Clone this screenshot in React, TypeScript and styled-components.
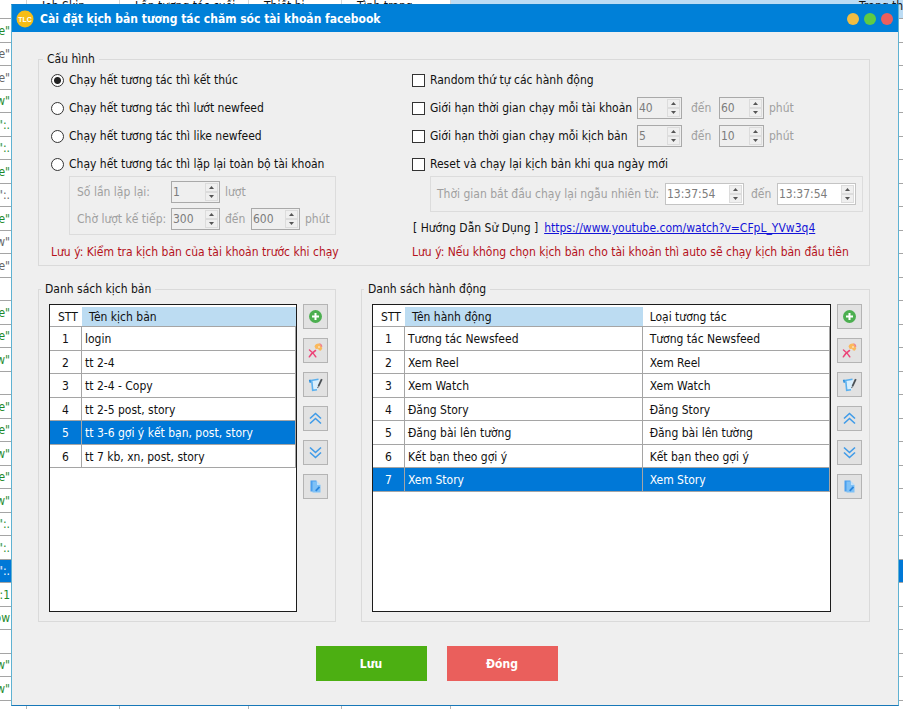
import React, { useState } from "react";
import type { ReactNode } from "react";
import styled, { createGlobalStyle, css } from "styled-components";

const GlobalStyle = createGlobalStyle`
  *, *::before, *::after { box-sizing: border-box; }
  body {
    margin: 0;
    background: #fff;
    color: #111;
    font: 12px/16px Tahoma, "DejaVu Sans Condensed", "Noto Sans", sans-serif;
  }
  input, button { font: inherit; }
`;

/* ---------- host grid behind the dialog ---------- */

const Page = styled.div`
  position: relative;
  min-height: 100vh;
  display: flex;
  overflow: hidden;
`;

const Backdrop = styled.div`
  position: absolute;
  inset: 0;
  overflow: hidden;
`;

const HostTable = styled.table`
  width: 100%;
  border-collapse: separate;
  border-spacing: 0;
  table-layout: fixed;

  th {
    height: 19px;
    padding: 0 0 4px 15px;
    border-right: 1px solid #d5d5d5;
    border-bottom: 1px solid #a5a5a5;
    font-weight: 400;
    text-align: left;
    white-space: nowrap;
    line-height: 12px;
    vertical-align: top;
  }
  th:first-child { padding: 0; }
  th:nth-child(n + 6) { background: #bcdcf4; border-right: 0; padding-left: 0; }
`;

const HostRow = styled.tr<{ $selected?: boolean }>`
  height: 24px;
  &:nth-child(even) { height: 23px; }
  background: ${(p) => (p.$selected ? "#0078d7" : "#fff")};

  td {
    padding: 0;
    border-right: 1px solid #b5b5b5;
    border-bottom: 1px solid #a5a5a5;
  }
  td:nth-child(n + 6) { border-right: 0; }
`;

const HostValue = styled.span<{ $tone: string }>`
  display: flex;
  justify-content: flex-end;
  width: 10px;
  height: 16px;
  white-space: nowrap;
  color: ${(p) => p.$tone};
`;

/* ---------- dialog frame ---------- */

const Dialog = styled.main`
  position: relative;
  flex: 1;
  min-width: 0;
  margin: 4px 4px 4px 11px;
  display: flex;
  flex-direction: column;
  background: #efefef;
  border: 1px solid #5fb2d2;
  border-top-color: #0a7fce;
  border-bottom-color: #1878b8;
`;

const TitleBar = styled.header`
  display: flex;
  align-items: center;
  gap: 6px;
  height: 27px;
  padding: 0 5px 0 4px;
  background: #0080d8;
  color: #fff;

  h1 { flex: 1; margin: 0; font-size: 12px; line-height: 16px; font-weight: 700; }
`;

const WindowDots = styled.div`
  display: flex;
  gap: 5px;
`;

const Dot = styled.button<{ $color: string }>`
  width: 12px;
  height: 12px;
  padding: 0;
  border: 0;
  border-radius: 50%;
  background: ${(p) => p.$color};
`;

const Body = styled.form`
  flex: 1;
  display: flex;
  flex-direction: column;
  padding: 20px 28px 24px 26px;
`;

const Group = styled.fieldset`
  min-width: 0;
  margin: 0;
  padding: 4px 6px 5px 12px;
  border: 1px solid #dadada;

  > legend { margin-left: -8px; padding: 0 4px; line-height: 14px; }
`;

/* ---------- settings ---------- */

const ConfigGrid = styled.div`
  display: grid;
  grid-template-columns: 361fr 451fr;
`;

const Options = styled.div`
  display: flex;
  flex-direction: column;
  gap: 8px;
`;

const OptionRow = styled.div`
  display: flex;
  align-items: center;
  height: 20px;
  white-space: nowrap;
`;

const Choice = styled.label<{ $width?: number }>`
  display: flex;
  align-items: center;
  gap: 5px;
  ${(p) => p.$width && css`flex: none; width: ${p.$width}px;`}
`;

const Radio = styled.input.attrs({ type: "radio" })`
  appearance: none;
  flex: none;
  width: 13px;
  height: 13px;
  margin: 0;
  border: 1px solid #333;
  border-radius: 50%;
  background: #fff;
  &:checked { background: radial-gradient(circle, #222 0 3px, #fff 4px); }
`;

const Check = styled.input.attrs({ type: "checkbox" })`
  appearance: none;
  flex: none;
  width: 13px;
  height: 13px;
  margin: 0;
  border: 1px solid #333;
  background: #fff;
  &:checked { background: #333; box-shadow: inset 0 0 0 2px #fff; }
`;

const SubPanel = styled.div<{ $pad: string }>`
  display: flex;
  flex-direction: column;
  gap: 5px;
  margin: -6px 0 0 18px;
  padding: ${(p) => p.$pad};
  border: 1px solid #dcdcdc;
  color: #a0a0a0;
`;

const LeftPanel = styled(SubPanel)`
  width: 267px;
`;

const FieldRow = styled.div`
  display: flex;
  align-items: center;
  height: 22px;
  white-space: nowrap;
`;

const FieldLabel = styled.label<{ $width: number }>`
  flex: none;
  width: ${(p) => p.$width}px;
`;

const Between = styled.span<{ $width: number; $left: number }>`
  flex: none;
  width: ${(p) => p.$width}px;
  padding-left: ${(p) => p.$left}px;
  color: #a0a0a0;
`;

const SpinFrame = styled.span<{ $width: number; $white?: boolean }>`
  display: flex;
  flex: none;
  width: ${(p) => p.$width}px;
  height: 22px;
  border: 1px solid ${(p) => (p.$white ? "#c4c4c4" : "#a9a9a9")};
  background: ${(p) => (p.$white ? "#fff" : "#efefef")};

  input {
    flex: 1;
    width: 0;
    min-width: 0;
    padding: 0 0 0 1px;
    border: 0;
    background: transparent;
    color: #7c7c7c;
    outline: 0;
  }
`;

const SpinButtons = styled.span`
  display: flex;
  flex-direction: column;
  width: 14px;
  padding: 1px 1px 1px 0;

  button {
    flex: 1;
    display: flex;
    align-items: center;
    justify-content: center;
    padding: 0;
    border: 1px solid #dcdcdc;
    background: #efefef;
  }
`;

const Note = styled.p`
  margin: 0;
  color: #b5121b;
  white-space: nowrap;
`;

const Guide = styled.p`
  display: flex;
  gap: 6px;
  margin: 0;
  padding: 8px 0 8px 1px;
  white-space: nowrap;

  a { color: #1414d8; }
`;

/* ---------- lists ---------- */

const Lists = styled.div`
  flex: 1;
  display: grid;
  grid-template-columns: 298fr 509fr;
  gap: 25px;
  margin-top: 16px;
`;

const ListGroup = styled(Group)`
  display: grid;
  padding: 8px 7px 9px 10px;
`;

const ListLayout = styled.div`
  display: flex;
  gap: 6px;
  min-height: 308px;
`;

const TableFrame = styled.div`
  flex: 1;
  min-width: 0;
  border: 1px solid #1c1c1c;
  background: #fff;
`;

const DataTable = styled.table`
  width: 100%;
  border-collapse: separate;
  border-spacing: 0;
  table-layout: fixed;
  white-space: nowrap;

  th {
    height: 22px;
    padding: 2px 0 0 7px;
    border-bottom: 1px solid #a5a5a5;
    font-weight: 400;
    text-align: left;
  }
  th:first-child { padding-left: 8px; }
  th:nth-child(2) { background: linear-gradient(#fff 2px, #bcdcf2 2px); }
`;

const DataRow = styled.tr<{ $selected: boolean }>`
  height: 24px;
  &:nth-child(even) { height: 23px; }
  background: ${(p) => (p.$selected ? "#0078d7" : "#fff")};
  color: ${(p) => (p.$selected ? "#fff" : "#111")};

  td {
    padding: 1px 0 0 3px;
    border-right: 1px solid #a5a5a5;
    border-bottom: 1px solid #a5a5a5;
  }
  td:first-child { padding: 1px 0 0; text-align: center; }
  td:nth-child(3) { padding-left: 7px; }
`;

const Tools = styled.div`
  display: flex;
  flex-direction: column;
  gap: 9px;
`;

const Tool = styled.button`
  display: flex;
  align-items: center;
  justify-content: center;
  width: 25px;
  height: 25px;
  padding: 0;
  border: 1px solid #b4b4b4;
  background: #e2e2e2;
`;

const Footer = styled.footer`
  display: flex;
  justify-content: center;
  gap: 20px;
  padding: 24px 35px 0 0;
`;

const Action = styled.button<{ $color: string }>`
  width: 111px;
  height: 35px;
  border: 0;
  background: ${(p) => p.$color};
  color: #fff;
  font-weight: 700;
`;

/* ---------- drawings ---------- */

const Logo = () => (
  <svg width="18" height="18" viewBox="0 0 18 18" aria-hidden="true">
    <circle cx="9" cy="9" r="8.5" fill="#f6bd16" />
    <text x="9" y="11.5" textAnchor="middle" fontSize="7" fontWeight="700" fill="#fff" fontFamily="Liberation Sans, sans-serif">TLC</text>
  </svg>
);

const PlusIcon = () => (
  <svg width="15" height="15" viewBox="0 0 15 15">
    <circle cx="7.5" cy="7.5" r="6.5" fill="#4caf50" />
    <path d="M7.5 4v7M4 7.5h7" stroke="#fff" strokeWidth="2" />
  </svg>
);

const RemoveIcon = () => (
  <svg width="17" height="17" viewBox="0 0 17 17">
    <path d="M7.5 4.5C8 2.500 10 1.200 12.300 1.500l1.200 1.200 1.800 3.800-1.500 2.200-2-.4-.6-1.600-2.400.3z" fill="#fbb95c" />
    <path d="M12 1.200c1.800 0 3.600 1.500 3.300 4l-1.600-.7-.3-1.600z" fill="#f0808c" />
    <circle cx="12" cy="5" r="1" fill="#fde1b4" />
    <path d="M2.500 8c2.300 1.800 4.500 4 6.300 6.800M8.500 8.500C6.500 9.800 4 12.200 2.300 14.800" stroke="#ec4478" strokeWidth="1.500" fill="none" strokeLinecap="round" />
  </svg>
);

const EditIcon = () => (
  <svg width="17" height="17" viewBox="0 0 17 17">
    <path d="M4 4.500l8.500-1-1.500 10.300-5.500.9z" fill="#d9effd" />
    <path d="M2.500 4.700l9-1.500M4.800 5l.9 9.300 4.300-.6" stroke="#5bb0ee" strokeWidth="1.600" fill="none" />
    <path d="M2.600 3.700l.8 3" stroke="#2d8fdd" strokeWidth="1.500" />
    <path d="M14.800 3.200l-3.300 7" stroke="#4a5055" strokeWidth="1.800" />
    <path d="M11.400 10.300l-.8 1.800" stroke="#4a5055" strokeWidth="1" />
  </svg>
);

const UpIcon = () => (
  <svg width="15" height="15" viewBox="0 0 15 15" fill="none" stroke="#3f9be8" strokeWidth="1.600">
    <path d="M2 7.500l5.500-5 5.500 5M2 12.500l5.500-5 5.500 5" />
  </svg>
);

const DownIcon = () => (
  <svg width="15" height="15" viewBox="0 0 15 15" fill="none" stroke="#3f9be8" strokeWidth="1.600">
    <path d="M2 2.500l5.500 5 5.500-5M2 7.500l5.500 5 5.500-5" />
  </svg>
);

const CopyIcon = () => (
  <svg width="15" height="15" viewBox="0 0 15 15">
    <path d="M2.500 1.500h6v11h-6z" fill="#4a9fee" />
    <path d="M4.500 2.500H9l3.500 3.500v7.500h-8z" fill="#7fc1f6" />
    <path d="M9 2.500l3.500 3.500H9z" fill="#c4e2fb" />
    <path d="M11.500 7.800l-3.800 4" stroke="#2a86de" strokeWidth="1.800" />
  </svg>
);

const Arrow = ({ down = false }: { down?: boolean }) => (
  <svg width="5" height="3" viewBox="0 0 5 3">
    <path d={down ? "M0 0h5L2.500 3z" : "M0 3h5L2.500 0z"} fill="#555" />
  </svg>
);

/* ---------- data ---------- */

const GREEN = "#1f8a2c";
const GRAY = "#666";

const hostRows: [string, string][] = [
  ['e"', GREEN], ['e"', GRAY], ['e"', GRAY], ['w"', GREEN], ['":.', GREEN], ['":.', GREEN],
  ['e"', GREEN], ['":.', GRAY], ['e"', GREEN], ['w"', GRAY], ['e"', GRAY], ["", GREEN],
  ['e"', GREEN], ['e"', GREEN], ['w"', GREEN], ["", GREEN], ['e"', GREEN], ['e"', GREEN],
  ['w"', GREEN], ['e"', GREEN], ['w"', GREEN], ['":.', GREEN], ['":.', GREEN], ['":.', "#fff"],
  ['":1', GREEN], ["ow", GREEN], ["", GREEN], ['w"', GREEN], ['w"', GREEN], ["", GREEN],
];

const finishModes = [
  "Chạy hết tương tác thì kết thúc",
  "Chạy hết tương tác thì lướt newfeed",
  "Chạy hết tương tác thì like newfeed",
  "Chạy hết tương tác thì lặp lại toàn bộ tài khoản",
];

const scripts = [
  ["login"], ["tt 2-4"], ["tt 2-4 - Copy"], ["tt 2-5 post, story"],
  ["tt 3-6 gợi ý kết bạn, post, story"], ["tt 7 kb, xn, post, story"],
];

const actions = [
  "Tương tác Newsfeed", "Xem Reel", "Xem Watch", "Đăng Story",
  "Đăng bài lên tường", "Kết bạn theo gợi ý", "Xem Story",
].map((name) => [name, name]);

const tools: [string, ReactNode][] = [
  ["Thêm", <PlusIcon />], ["Xóa", <RemoveIcon />], ["Sửa", <EditIcon />],
  ["Lên", <UpIcon />], ["Xuống", <DownIcon />], ["Nhân bản", <CopyIcon />],
];

/* ---------- parts ---------- */

type SpinProps = { id?: string; label: string; value: string; width: number; white?: boolean };

const Spin = ({ id, label, value, width, white }: SpinProps) => (
  <SpinFrame $width={width} $white={white}>
    <input id={id} aria-label={label} defaultValue={value} disabled />
    <SpinButtons>
      <button type="button" aria-label="Tăng" disabled><Arrow /></button>
      <button type="button" aria-label="Giảm" disabled><Arrow down /></button>
    </SpinButtons>
  </SpinFrame>
);

type ListProps = { title: string; columns: string[]; widths: string[]; rows: string[][]; initial: number };

const ListBox = ({ title, columns, widths, rows, initial }: ListProps) => {
  const [selected, setSelected] = useState(initial);
  return (
    <ListGroup>
      <legend>{title}</legend>
      <ListLayout>
        <TableFrame>
          <DataTable>
            <colgroup>
              <col width="32" />
              {widths.map((w, i) => <col key={i} width={w} />)}
            </colgroup>
            <thead>
              <tr>
                <th>STT</th>
                {columns.map((c) => <th key={c}>{c}</th>)}
              </tr>
            </thead>
            <tbody>
              {rows.map((cells, i) => (
                <DataRow key={i} $selected={i === selected} onClick={() => setSelected(i)}>
                  <td>{i + 1}</td>
                  {cells.map((c, j) => <td key={j}>{c}</td>)}
                </DataRow>
              ))}
            </tbody>
          </DataTable>
        </TableFrame>
        <Tools>
          {tools.map(([name, icon]) => (
            <Tool key={name} type="button" aria-label={name}>{icon}</Tool>
          ))}
        </Tools>
      </ListLayout>
    </ListGroup>
  );
};

const HostGrid = () => (
  <Backdrop aria-hidden="true">
    <HostTable>
      <colgroup>
        <col width="27" /><col width="93" /><col width="129" /><col width="93" />
        <col width="109" /><col /><col width="44" />
      </colgroup>
      <thead>
        <tr>
          <th />
          <th>Job Skip</th>
          <th>Lần tương tác cuối</th>
          <th>Thiết bị</th>
          <th>Tình trạng</th>
          <th />
          <th>Trạng thái</th>
        </tr>
      </thead>
      <tbody>
        {hostRows.map(([text, tone], i) => (
          <HostRow key={i} $selected={tone === "#fff"}>
            <td><HostValue $tone={tone}>{text}</HostValue></td>
            <td /><td /><td /><td /><td /><td />
          </HostRow>
        ))}
      </tbody>
    </HostTable>
  </Backdrop>
);

export default function App() {
  const [mode, setMode] = useState(0);
  return (
    <Page>
      <GlobalStyle />
      <HostGrid />
      <Dialog>
        <TitleBar>
          <Logo />
          <h1>Cài đặt kịch bản tương tác chăm sóc tài khoản facebook</h1>
          <WindowDots>
            <Dot $color="#f2bd42" aria-label="Thu nhỏ" />
            <Dot $color="#5fcb45" aria-label="Phóng to" />
            <Dot $color="#ea5f5c" aria-label="Đóng cửa sổ" />
          </WindowDots>
        </TitleBar>
        <Body>
          <Group>
            <legend>Cấu hình</legend>
            <ConfigGrid>
              <Options>
                {finishModes.map((text, i) => (
                  <OptionRow key={text}>
                    <Choice>
                      <Radio name="finish" checked={mode === i} onChange={() => setMode(i)} />
                      {text}
                    </Choice>
                  </OptionRow>
                ))}
                <LeftPanel $pad="4px 7px">
                  <FieldRow>
                    <FieldLabel htmlFor="repeat" $width={94}>Số lần lặp lại:</FieldLabel>
                    <Spin id="repeat" label="Số lần lặp lại" value="1" width={49} />
                    <Between $left={5} $width={31}>lượt</Between>
                  </FieldRow>
                  <FieldRow>
                    <FieldLabel htmlFor="wait" $width={94}>Chờ lượt kế tiếp:</FieldLabel>
                    <Spin id="wait" label="Chờ lượt kế tiếp từ" value="300" width={49} />
                    <Between $left={5} $width={31}>đến</Between>
                    <Spin label="Chờ lượt kế tiếp đến" value="600" width={49} />
                    <Between $left={5} $width={31}>phút</Between>
                  </FieldRow>
                </LeftPanel>
              </Options>
              <Options>
                <OptionRow>
                  <Choice><Check />Random thứ tự các hành động</Choice>
                </OptionRow>
                <OptionRow>
                  <Choice $width={225}><Check />Giới hạn thời gian chạy mỗi tài khoản</Choice>
                  <Spin label="Tài khoản từ" value="40" width={45} />
                  <Between $left={9} $width={37}>đến</Between>
                  <Spin label="Tài khoản đến" value="60" width={45} />
                  <Between $left={5} $width={31}>phút</Between>
                </OptionRow>
                <OptionRow>
                  <Choice $width={225}><Check />Giới hạn thời gian chạy mỗi kịch bản</Choice>
                  <Spin label="Kịch bản từ" value="5" width={45} />
                  <Between $left={9} $width={37}>đến</Between>
                  <Spin label="Kịch bản đến" value="10" width={45} />
                  <Between $left={5} $width={31}>phút</Between>
                </OptionRow>
                <OptionRow>
                  <Choice><Check />Reset và chạy lại kịch bản khi qua ngày mới</Choice>
                </OptionRow>
                <div>
                  <SubPanel $pad="6px">
                    <FieldRow>
                      <FieldLabel htmlFor="restart" $width={228}>Thời gian bắt đầu chạy lại ngẫu nhiên từ:</FieldLabel>
                      <Spin id="restart" label="Chạy lại từ" value="13:37:54" width={79} white />
                      <Between $left={7} $width={33}>đến</Between>
                      <Spin label="Chạy lại đến" value="13:37:54" width={79} white />
                    </FieldRow>
                  </SubPanel>
                  <Guide>
                    <span>[ Hướng Dẫn Sử Dụng ]</span>
                    <a href="https://www.youtube.com/watch?v=CFpL_YVw3q4">https://www.youtube.com/watch?v=CFpL_YVw3q4</a>
                  </Guide>
                </div>
              </Options>
              <Note>Lưu ý: Kiểm tra kịch bản của tài khoản trước khi chạy</Note>
              <Note>Lưu ý: Nếu không chọn kịch bản cho tài khoản thì auto sẽ chạy kịch bản đầu tiên</Note>
            </ConfigGrid>
          </Group>
          <Lists>
            <ListBox title="Danh sách kịch bản" columns={["Tên kịch bản"]} widths={["*"]} rows={scripts} initial={4} />
            <ListBox title="Danh sách hành động" columns={["Tên hành động", "Loại tương tác"]} widths={["52%", "*"]} rows={actions} initial={6} />
          </Lists>
          <Footer>
            <Action type="button" $color="#4caf12">Lưu</Action>
            <Action type="button" $color="#ea5f5c">Đóng</Action>
          </Footer>
        </Body>
      </Dialog>
    </Page>
  );
}
